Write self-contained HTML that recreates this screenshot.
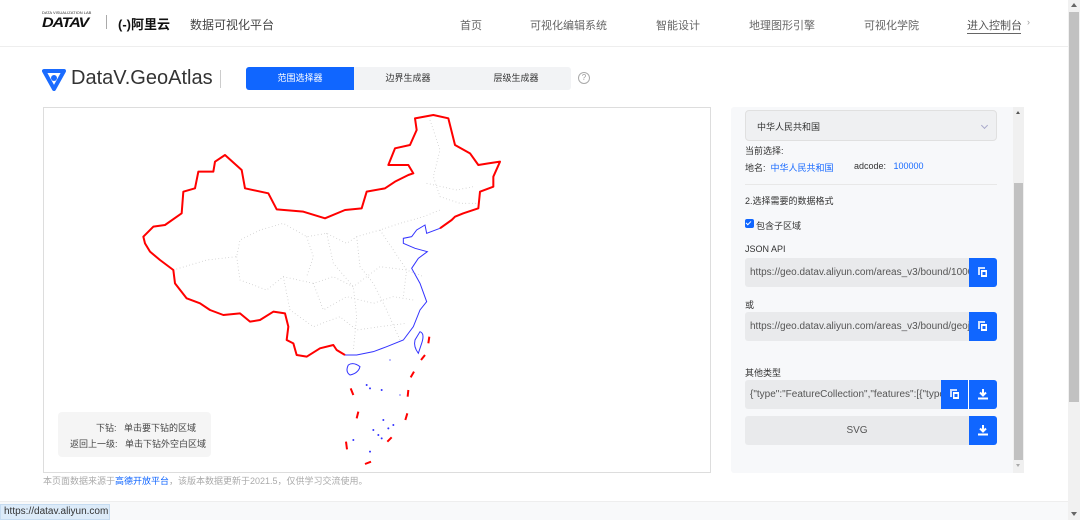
<!DOCTYPE html>
<html><head><meta charset="utf-8">
<style>
*{box-sizing:border-box;margin:0;padding:0}
body{width:1080px;height:520px;overflow:hidden;background:#fff;font-family:"Liberation Sans","Noto Sans CJK SC",sans-serif;position:relative;color:#333}
.a{position:absolute;white-space:nowrap}
.nav{font-size:11px;color:#666;top:17px}
.tab{position:absolute;top:67px;height:23px;font-size:9px;line-height:23px;text-align:center;color:#333}
.lbl{font-size:9px;color:#333}
.inp{position:absolute;background:#e9eaec;border-radius:3px 0 0 3px;font-size:10px;color:#555;line-height:29px;padding-left:5px;overflow:hidden;white-space:nowrap}
.btn{position:absolute;background:#1066ff;width:28px;height:29px;border-radius:0 3px 3px 0}
.btn svg{position:absolute;left:9px;top:9px}
</style></head><body>
<div class="a" style="left:0;top:0;width:1068px;height:47px;border-bottom:1px solid #eee"></div>
<div class="a" style="left:42px;top:10px;font-size:4px;color:#333;letter-spacing:0">DATA VISUALIZATION LAB</div>
<div class="a" style="left:42px;top:14px;font-size:14px;font-weight:bold;font-style:italic;color:#111;letter-spacing:-1px;transform:scaleX(1.15);transform-origin:left">DATAV</div>
<div class="a" style="left:106px;top:15px;width:1px;height:14px;background:#aaa"></div>
<div class="a" style="left:118px;top:14px;font-size:13px;font-weight:bold;color:#111">(-)阿里云</div>
<div class="a" style="left:190px;top:16px;font-size:12px;color:#444">数据可视化平台</div>
<div class="a nav" style="left:460px">首页</div>
<div class="a nav" style="left:530px">可视化编辑系统</div>
<div class="a nav" style="left:656px">智能设计</div>
<div class="a nav" style="left:749px">地理图形引擎</div>
<div class="a nav" style="left:864px">可视化学院</div>
<div class="a nav" style="left:967px;color:#555">进入控制台</div>
<div class="a" style="left:967px;top:33px;width:54px;height:1px;background:#666"></div>
<div class="a" style="left:1027px;top:17px;font-size:9px;color:#999">›</div>
<div class="a" style="left:1068px;top:0;width:12px;height:520px;background:#f1f1f1"></div>
<div class="a" style="left:1069px;top:12px;width:10px;height:390px;background:#c1c1c1"></div>
<div class="a" style="left:1071px;top:3px;width:0;height:0;border:3px solid transparent;border-bottom:4px solid #666;border-top:0"></div>
<div class="a" style="left:1071px;top:512px;width:0;height:0;border:3px solid transparent;border-top:4px solid #666;border-bottom:0"></div>
<svg class="a" style="left:42px;top:67px" width="24" height="24" viewBox="0 0 24 24"><path d="M2 4 L22 4 L12 22 Z" fill="none" stroke="#1a6bff" stroke-width="4" stroke-linejoin="round"/><circle cx="12" cy="11" r="3" fill="#1a6bff"/></svg>
<div class="a" style="left:71px;top:67px;font-size:20px;color:#333">DataV.GeoAtlas</div>
<div class="a" style="left:220px;top:70px;width:1px;height:18px;background:#ccc"></div>
<div class="a" style="left:246px;top:67px;width:325px;height:23px;background:#f2f3f5;border-radius:3px"></div>
<div class="tab" style="left:246px;width:108px;background:#1066ff;color:#fff;border-radius:3px 0 0 3px">范围选择器</div>
<div class="tab" style="left:354px;width:108px">边界生成器</div>
<div class="tab" style="left:462px;width:108px">层级生成器</div>
<div class="a" style="left:578px;top:72px;width:12px;height:12px;border:1px solid #aaa;border-radius:50%;font-size:8px;color:#999;text-align:center;line-height:10px">?</div>
<div class="a" style="left:43px;top:107px;width:668px;height:366px;border:1px solid #ddd"></div>
<svg class="a" style="left:140px;top:110px" width="370" height="360" viewBox="0 0 1110 1080">
<g fill="none" stroke="#bbb" stroke-width="2.5" stroke-dasharray="2 8">
<path d="M100 480 L200 450 L290 440 L300 390 L360 360 L430 340 L500 380 L560 370 L620 400 L650 380 L720 360 L780 340 L850 320 L900 300"/>
<path d="M290 440 L300 510 L380 540 L430 500 L520 520 L580 500 L640 530 L720 470 L800 480 L850 500"/>
<path d="M430 500 L450 600 L520 650 L600 620 L650 660 L720 650 L800 640"/>
<path d="M520 520 L550 600 L620 560 L700 580 L760 560 L820 570"/>
<path d="M650 380 L660 470 L700 520 L740 600 L780 690"/>
<path d="M560 370 L580 460 L640 530 L650 620 L640 720"/>
<path d="M720 360 L760 420 L800 480 L790 560"/>
<path d="M870 30 L900 120 L880 200 L900 260 L960 280 L1010 280"/>
<path d="M860 220 L950 240 L1000 230"/>
<path d="M500 380 L520 440 L500 500"/>
</g>
<path d="M615 735 L590 720 L580 705 L540 715 L500 740 L470 735 L460 700 L440 690 L445 650 L435 610 L400 605 L360 630 L330 635 L300 610 L250 615 L210 600 L180 580 L140 565 L105 520 L100 480 L60 450 L30 425 L15 400 L10 380 L40 350 L75 345 L125 310 L130 245 L165 235 L175 185 L220 185 L225 155 L255 135 L305 180 L315 235 L385 250 L410 298 L490 305 L555 325 L615 300 L665 295 L680 245 L735 235 L765 215 L805 195 L820 190 L805 165 L745 165 L765 115 L810 105 L830 60 L825 25 L880 15 L925 25 L945 105 L990 130 L1015 165 L1045 160 L1080 155 L1060 200 L1060 230 L1020 245 L1015 295 L970 310 L945 320 L935 330 L900 355" fill="none" stroke="#f00" stroke-width="6" stroke-linejoin="round"/>
<path d="M900 355 L860 370 L855 345 L830 360 L815 380 L790 385 L790 400 L825 415 L862 425 L835 445 L815 475 L840 520 L860 575 L840 600 L820 650 L790 690 L740 710 L700 725 L650 735 L615 735" fill="none" stroke="#33f" stroke-width="3"/>
<path d="M625 765 Q640 755 660 770 Q655 790 630 795 Q615 785 625 765Z" fill="none" stroke="#33f" stroke-width="3"/>
<path d="M840 665 Q855 670 845 700 L835 730 Q820 710 825 690Z" fill="none" stroke="#33f" stroke-width="3"/>
<g stroke="#f00" stroke-width="6">
<path d="M868 680 L865 700"/><path d="M855 735 L843 750"/><path d="M822 785 L812 802"/><path d="M805 840 L803 860"/><path d="M802 910 L796 930"/><path d="M755 982 L742 995"/><path d="M693 1055 L675 1062"/><path d="M618 995 L621 1018"/><path d="M655 905 L650 925"/><path d="M632 835 L640 855"/>
</g>
<g fill="#33f"><circle cx="680" cy="825" r="3"/><circle cx="690" cy="835" r="3"/><circle cx="725" cy="840" r="3"/><circle cx="730" cy="930" r="3"/><circle cx="745" cy="955" r="3"/><circle cx="715" cy="975" r="3"/><circle cx="700" cy="960" r="3"/><circle cx="690" cy="1025" r="3"/><circle cx="640" cy="990" r="3"/><circle cx="760" cy="945" r="3"/><circle cx="725" cy="985" r="3"/><circle cx="750" cy="750" r="2"/><circle cx="780" cy="855" r="2"/></g>
</svg>
<div class="a" style="left:58px;top:412px;width:153px;height:45px;background:#f5f5f5;border-radius:4px"></div>
<div class="a lbl" style="left:96px;top:421px;color:#444">下钻:&nbsp;&nbsp;&nbsp;单击要下钻的区域</div>
<div class="a lbl" style="left:70px;top:437px;color:#444">返回上一级:&nbsp;&nbsp;&nbsp;单击下钻外空白区域</div>
<div class="a" style="left:43px;top:474px;font-size:9px;color:#aaa">本页面数据来源于<span style="color:#1066ff">高德开放平台</span>，该版本数据更新于2021.5，仅供学习交流使用。</div>
<div class="a" style="left:0;top:501px;width:1068px;height:19px;background:#f8f9fa;border-top:1px solid #eee"></div>
<div class="a" style="left:0;top:504px;width:110px;height:16px;background:#dcebf9;border:1px solid #c6dcf1;font-size:10px;color:#333;line-height:14px;padding-left:3px">https://datav.aliyun.com</div>
<div class="a" style="left:731px;top:107px;width:293px;height:366px;background:#f7f8fa;border-radius:3px"></div>
<div class="a" style="left:1013px;top:107px;width:11px;height:366px;background:#f0f0f0"></div>
<div class="a" style="left:1014px;top:183px;width:9px;height:277px;background:#c1c1c1"></div>
<div class="a" style="left:1016px;top:111px;border:2.5px solid transparent;border-bottom:3px solid #555;border-top:0"></div>
<div class="a" style="left:1016px;top:464px;border:2.5px solid transparent;border-top:3px solid #aaa;border-bottom:0"></div>
<div class="a" style="left:745px;top:110px;width:252px;height:31px;background:#eff0f2;border:1px solid #e0e0e0;border-radius:4px"></div>
<div class="a lbl" style="left:757px;top:120px">中华人民共和国</div>
<div class="a" style="left:982px;top:123px;width:5px;height:5px;border-right:1px solid #aac;border-bottom:1px solid #aac;transform:rotate(45deg)"></div>
<div class="a lbl" style="left:745px;top:144px">当前选择:</div>
<div class="a lbl" style="left:745px;top:161px">地名:&nbsp;&nbsp;<span style="color:#1a6bff">中华人民共和国</span></div>
<div class="a lbl" style="left:854px;top:161px">adcode:&nbsp;&nbsp;&nbsp;<span style="color:#1a6bff">100000</span></div>
<div class="a" style="left:745px;top:184px;width:252px;height:1px;background:#e8e8e8"></div>
<div class="a lbl" style="left:745px;top:194px">2.选择需要的数据格式</div>
<div class="a" style="left:745px;top:219px;width:9px;height:9px;background:#1066ff;border-radius:2px"></div>
<div class="a" style="left:747px;top:220px;width:3px;height:5px;border-right:1px solid #fff;border-bottom:1px solid #fff;transform:rotate(45deg)"></div>
<div class="a lbl" style="left:756px;top:219px">包含子区域</div>
<div class="a lbl" style="left:745px;top:244px">JSON API</div>
<div class="inp" style="left:745px;top:258px;width:224px;height:29px">https://geo.datav.aliyun.com/areas_v3/bound/10000</div>
<div class="btn" style="left:969px;top:258px"><svg width="10" height="11" viewBox="0 0 10 11"><rect x="0" y="0" width="7" height="8" fill="#fff" opacity=".8"/><rect x="2.5" y="2.5" width="7" height="8" fill="#fff" stroke="#1066ff"/><rect x="4.5" y="5" width="3" height="3" fill="#1066ff"/></svg></div>
<div class="a lbl" style="left:745px;top:298px">或</div>
<div class="inp" style="left:745px;top:312px;width:224px;height:29px">https://geo.datav.aliyun.com/areas_v3/bound/geojs</div>
<div class="btn" style="left:969px;top:312px"><svg width="10" height="11" viewBox="0 0 10 11"><rect x="0" y="0" width="7" height="8" fill="#fff" opacity=".8"/><rect x="2.5" y="2.5" width="7" height="8" fill="#fff" stroke="#1066ff"/><rect x="4.5" y="5" width="3" height="3" fill="#1066ff"/></svg></div>
<div class="a lbl" style="left:745px;top:366px">其他类型</div>
<div class="inp" style="left:745px;top:380px;width:196px;height:29px">{"type":"FeatureCollection","features":[{"type"</div>
<div class="btn" style="left:941px;top:380px;border-radius:0;border-right:1px solid #fff"><svg width="10" height="11" viewBox="0 0 10 11"><rect x="0" y="0" width="7" height="8" fill="#fff" opacity=".8"/><rect x="2.5" y="2.5" width="7" height="8" fill="#fff" stroke="#1066ff"/><rect x="4.5" y="5" width="3" height="3" fill="#1066ff"/></svg></div>
<div class="btn" style="left:969px;top:380px"><svg width="10" height="11" viewBox="0 0 10 11"><path d="M5 0 V6 M2 3.5 L5 6.5 L8 3.5" stroke="#fff" stroke-width="2" fill="none"/><rect x="0" y="8.5" width="10" height="2" fill="#fff"/></svg></div>
<div class="inp" style="left:745px;top:416px;width:224px;height:29px;text-align:center;padding:0">SVG</div>
<div class="btn" style="left:969px;top:416px"><svg width="10" height="11" viewBox="0 0 10 11"><path d="M5 0 V6 M2 3.5 L5 6.5 L8 3.5" stroke="#fff" stroke-width="2" fill="none"/><rect x="0" y="8.5" width="10" height="2" fill="#fff"/></svg></div>
</body></html>
